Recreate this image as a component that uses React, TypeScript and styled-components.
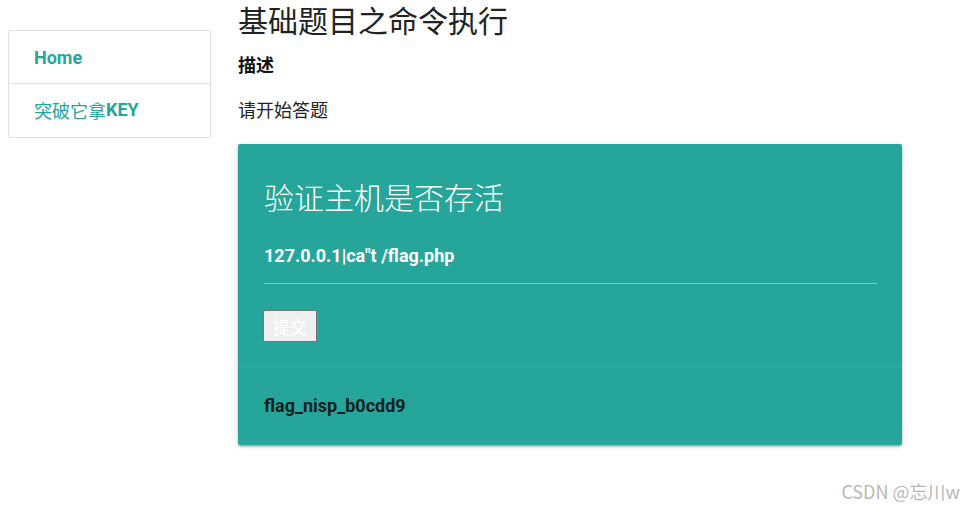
import React from 'react';
import styled, { createGlobalStyle } from 'styled-components';

const Global = createGlobalStyle`
  body {
    margin: 0;
    background: #fff;
    font-family: Roboto, "Noto Sans CJK SC", sans-serif;
    color: rgba(0, 0, 0, 0.87);
  }
`;

const Page = styled.div`
  display: flex;
  align-items: flex-start;
  gap: 27px;
  padding: 0 63px 0 8px;
  height: 510px;
  position: relative;
  box-sizing: border-box;
`;

const Collection = styled.ul`
  list-style: none;
  margin: 30px 0 0;
  padding: 0;
  width: 203px;
  box-sizing: border-box;
  border: 1px solid #e0e0e0;
  border-radius: 2px;
`;

const NavItem = styled.li`
  box-sizing: border-box;
  height: 53px;
  display: flex;
  align-items: center;
  padding: 0 25px;
  font-size: 18px;
  color: #26a69a;
  border-bottom: 1px solid #e0e0e0;
  &:last-child { border-bottom: none; padding-bottom: 2px; }
`;

const B = styled.b`
  font-weight: 700;
`;

const Main = styled.div`
  flex: 1;
  display: flex;
  flex-direction: column;
`;

const Title = styled.h3`
  margin: 2px 0 0;
  font-size: 30px;
  line-height: 40px;
  font-weight: 400;
  color: #222;
`;

const Label = styled.h4`
  margin: 11px 0 0;
  font-size: 18px;
  line-height: 26px;
  font-weight: 700;
  color: #111;
`;

const Para = styled.p`
  margin: 19px 0 0;
  font-size: 18px;
  line-height: 26px;
  color: #222;
`;

const Card = styled.div`
  margin-top: 20px;
  background: #26a69a;
  border-radius: 2px;
  box-shadow: 0 2px 2px 0 rgba(0,0,0,0.14), 0 3px 1px -2px rgba(0,0,0,0.12), 0 1px 5px 0 rgba(0,0,0,0.2);
`;

const CardContent = styled.div`
  padding: 32px 25px 25px 26px;
  color: #fff;
`;

const CardTitle = styled.div`
  font-size: 30px;
  line-height: 45px;
  font-weight: 300;
`;

const Cmd = styled.div`
  margin-top: 22px;
  font-size: 18px;
  font-weight: 700;
  line-height: 26px;
`;

const Rule = styled.hr`
  margin: 14px 0 0;
  border: none;
  border-top: 1px solid rgba(200, 200, 200, 0.7);
`;

const Submit = styled.button`
  display: block;
  box-sizing: border-box;
  margin: 26px 0 0 -1px;
  width: 54px;
  height: 32px;
  padding: 0;
  background: #efefef;
  border: 1px solid #767676;
  border-radius: 2px;
  color: #fff;
  font-family: "Noto Sans CJK SC", sans-serif;
  font-size: 17px;
`;

const CardAction = styled.div`
  border-top: 1px solid rgba(160, 160, 160, 0.2);
  padding: 25px 26px 26px;
  font-size: 18px;
  line-height: 26px;
  font-weight: 700;
  color: #10201e;
`;

const Watermark = styled.div`
  position: absolute;
  right: 5px;
  bottom: 6px;
  font-family: "Noto Sans CJK SC", sans-serif;
  font-size: 18px;
  color: #b8b8b8;
`;

export default function App() {
  return (
    <>
      <Global />
      <Page>
        <Collection>
          <NavItem><B>Home</B></NavItem>
          <NavItem>突破它拿<B>KEY</B></NavItem>
        </Collection>
        <Main>
          <Title>基础题目之命令执行</Title>
          <Label>描述</Label>
          <Para>请开始答题</Para>
          <Card>
            <CardContent>
              <CardTitle>验证主机是否存活</CardTitle>
              <Cmd>127.0.0.1|ca"t /flag.php</Cmd>
              <Rule />
              <Submit>提交</Submit>
            </CardContent>
            <CardAction>flag_nisp_b0cdd9</CardAction>
          </Card>
        </Main>
        <Watermark>CSDN @忘川w</Watermark>
      </Page>
    </>
  );
}
